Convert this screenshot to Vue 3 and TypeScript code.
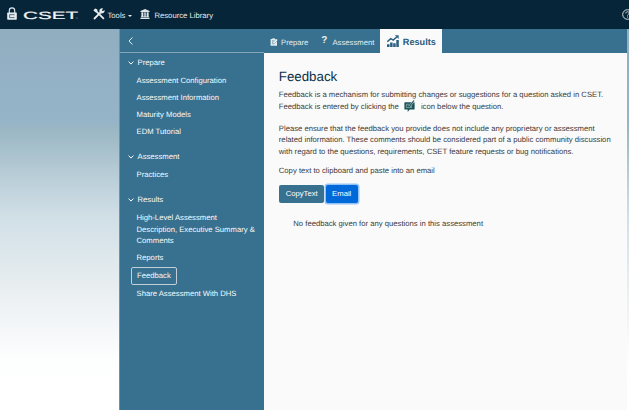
<script setup lang="ts">
interface NavItem { label: string; active?: boolean }
interface NavGroup { title: string; items: NavItem[] }

const groups: NavGroup[] = [
  {
    title: 'Prepare',
    items: [
      { label: 'Assessment Configuration' },
      { label: 'Assessment Information' },
      { label: 'Maturity Models' },
      { label: 'EDM Tutorial' },
    ],
  },
  { title: 'Assessment', items: [{ label: 'Practices' }] },
  {
    title: 'Results',
    items: [
      { label: 'High-Level Assessment Description, Executive Summary & Comments' },
      { label: 'Reports' },
      { label: 'Feedback', active: true },
      { label: 'Share Assessment With DHS' },
    ],
  },
]
</script>

<template>
  <div class="app">
    <header class="topbar">
      <svg class="lock" viewBox="0 0 10 13">
        <path d="M2.3 6V3.6a2.7 2.7 0 0 1 5.4 0V6" fill="none" stroke="#e6edf1" stroke-width="1.1" />
        <rect x="0.2" y="5.6" width="9.6" height="7.2" rx="0.7" fill="#e6edf1" />
        <path d="M7.6 7.7H2.6v2.9h5" fill="none" stroke="#4a6272" stroke-width="0.9" />
      </svg>
      <svg class="wordmark" viewBox="0 0 56 12">
        <text x="0" y="9.6" textLength="55" lengthAdjust="spacingAndGlyphs">CSET</text>
        <circle cx="54" cy="9" r="0.5" fill="#c3ced6" />
      </svg>
      <div class="menu tools">
        <svg class="tools-icon" viewBox="0 0 12 12">
          <path d="M2.6 2.6 10.4 10.4" stroke="#e6edf1" stroke-width="1.8" stroke-linecap="round" />
          <path d="M0.4 2.2 2.2 0.4 4.4 1.6 4.3 3.9 2.4 4.3z" fill="#e6edf1" />
          <path d="M8.6 3.4 1.5 10.5" stroke="#e6edf1" stroke-width="1.8" stroke-linecap="round" />
          <path d="M10.2 0.6A2.6 2.6 0 1 0 11.4 2L9.8 3.3 8.7 2.2z" fill="#e6edf1" />
        </svg>
        <span>Tools</span>
        <i class="caret"></i>
      </div>
      <div class="menu library">
        <svg class="library-icon" viewBox="0 0 10 11">
          <path d="M5 0 10 2.3v.9H0v-.9zM1 3.6h1.8v4.6h.7V3.6h1.2v4.6h.6V3.6h1.2v4.6h.7V3.6H9v4.6h.5v1H.5v-1H1zM0 9.6h10V11H0z" fill="#dfe7ec" />
        </svg>
        <span>Resource Library</span>
      </div>
      <svg class="help" viewBox="0 0 11 11">
        <circle cx="5.5" cy="5.5" r="4.8" fill="none" stroke="#d5dde3" stroke-width="1" />
        <path d="M3.8 4.4C3.8 2.2 7.3 2.3 7.2 4.3 7.1 5.3 5.6 5.3 5.6 6.6M5.6 7.5v1" fill="none" stroke="#d5dde3" stroke-width="1" />
      </svg>
    </header>

    <div class="body">
      <div class="shell">
        <div class="tabbar">
          <div class="collapse">
            <svg class="back" viewBox="0 0 5 8"><path d="M4.4.5 1 4l3.4 3.5" fill="none" stroke="#eaf1f4" stroke-width="1" /></svg>
          </div>
          <nav class="tabs">
            <div class="tab prepare">
              <svg class="tab-edit" viewBox="0 0 8 8">
                <path d="M.6 1h1.9V.3h2.2V1H7v6.7H.6z" fill="#e3edf1" />
                <path d="M2 2.8h1.8M2 4.2h1" stroke="#38718f" stroke-width=".6" fill="none" />
                <path d="M2.7 6.1 3.2 4.3 6.5.9 7.8 2.1 4.4 5.6z" fill="#fff" stroke="#38718f" stroke-width=".5" />
              </svg>
              <span>Prepare</span>
            </div>
            <div class="tab assess"><b class="question">?</b><span>Assessment</span></div>
            <div class="tab selected">
              <svg class="chart" viewBox="0 0 12 12">
                <path d="M0 9.3h2.5V12H0zM3.1 7.6h2.5V12H3.1zM6.2 8.2h2.5V12H6.2zM9.3 5h2.5v7H9.3z" fill="#2b6080" />
                <path d="M.3 6.8 3.7 3.6l2.5 1.5L10 1.8" fill="none" stroke="#2b6080" stroke-width="1.5" />
                <path d="M7.9.2H11.6V3.9z" fill="#2b6080" />
              </svg>
              <span>Results</span>
            </div>
          </nav>
        </div>

        <div class="columns">
          <aside class="sidebar">
            <section v-for="group in groups" :key="group.title" class="group">
              <div class="group-title">
                <svg class="chevron" viewBox="0 0 6 4"><path d="M.6.6 3 3.1 5.4.6" fill="none" stroke="#fff" stroke-width="1" /></svg>
                <span>{{ group.title }}</span>
              </div>
              <div v-for="item in group.items" :key="item.label" class="item" :class="{ active: item.active }">{{ item.label }}</div>
            </section>
          </aside>

          <main class="content">
            <h1>Feedback</h1>
            <p class="intro">
              Feedback is a mechanism for submitting changes or suggestions for a question asked in CSET.<br />
              <span class="icon-line">
                <span>Feedback is entered by clicking the</span>
                <svg class="note" viewBox="0 0 11 13">
                  <path d="M1 2.2h9q.6 0 .6.6V9q0 .6-.6.6H5.7L3.7 12V9.6H1Q.4 9.6.4 9V2.8Q.4 2.2 1 2.2z" fill="#1b5259" />
                  <path d="M2.4 4.2h3M2.4 4.2V7.6h5.2V5.6M3.6 5.8h1.2" stroke="#9dbbbd" stroke-width=".7" fill="none" />
                  <path d="M5.3 6.6 9.8.8" stroke="#d9e5e5" stroke-width="1.9" />
                  <path d="M5.1 6.9 10 .5" stroke="#1b5259" stroke-width="1.2" />
                </svg>
                <span>icon below the question.</span>
              </span>
            </p>
            <p class="notice">
              Please ensure that the feedback you provide does not include any proprietary or assessment<br />
              related information. These comments should be considered part of a public community discussion<br />
              with regard to the questions, requirements, CSET feature requests or bug notifications.
            </p>
            <p class="copy">Copy text to clipboard and paste into an email</p>
            <div class="buttons">
              <button class="btn">CopyText</button>
              <button class="btn focus">Email</button>
            </div>
            <p class="empty">No feedback given for any questions in this assessment</p>
          </main>
        </div>
      </div>
    </div>
  </div>
</template>

<style>
body { overflow: hidden; }
</style>

<style scoped>
* { box-sizing: border-box; }
.app {
  width: 629px; height: 410px; display: flex; flex-direction: column; overflow: hidden;
  font-family: "Liberation Sans", Arial, sans-serif; font-size: 7.7px; line-height: 11.5px;
  text-rendering: geometricPrecision; color: #3a3a3a;
}
svg { display: block; flex: none; }
.topbar {
  height: 29px; flex: none; display: flex; align-items: center; padding-left: 7px;
  background: #072538; color: #e6ebee;
}
.lock { width: 10px; height: 13px; margin-bottom: 3px; }
.wordmark { width: 56px; height: 12px; margin: 1px 0 0 6px; }
.wordmark text { font-family: "Liberation Sans", sans-serif; font-size: 10.5px; font-weight: 400; fill: #f1f4f6; stroke: #f1f4f6; stroke-width: .2px; }
.menu { display: flex; align-items: center; white-space: nowrap; }
.menu span { padding-top: 2px; }
.tools { margin-left: 13.5px; }
.tools-icon { width: 12px; height: 12px; margin: 0 3px 1px 0; }
.caret { border: 2px solid transparent; border-top-color: #e6ebee; border-bottom: 0; margin: 2px 0 0 2.5px; }
.library { margin-left: 8.5px; }
.library-icon { width: 10px; height: 10px; margin: 0 4px 1px 0; }
.help { width: 11px; height: 11px; margin: 0 -4px 1px auto; }
.body {
  flex: 1; min-height: 0; padding: 0 2px 0 119px;
  background: linear-gradient(#91aec1 0, #96b4c8 92px, #9ab7c3 101px, #b9cdd8 147px, #d0dfe6 187px, #dde7ec 225px, #e7edef 253px, #f3f6f8 295px, #fcfdfd 326px, #fff 350px);
}
.shell { height: 100%; display: flex; flex-direction: column; border-left: 1px solid #6794aa; }
.tabbar { height: 24px; flex: none; display: flex; background: #38718f; color: #e3edf1; }
.collapse { width: 143.5px; padding: 8px 0 0 7.5px; border-bottom: 1px solid #83a6b9; }
.back { width: 5px; height: 8px; }
.tabs { display: flex; align-items: stretch; flex: 1; }
.tab { display: flex; align-items: center; padding-top: 3px; }
.prepare { padding-left: 6px; }
.tab-edit { width: 8px; height: 8px; margin: 0 3.5px 2px 0; }
.assess { margin-left: 13px; }
.question { font-size: 10px; margin: 0 5px 3px 0; }
.selected {
  background: #fafafa; color: #25587a; margin-left: 6px; padding: 1px 0 0 6.5px; width: 62px;
  font-size: 9.15px; font-weight: 700;
}
.selected span { padding-top: 2px; }
.chart { width: 12px; height: 12px; margin: 0 4px 2px 0; }
.columns { flex: 1; min-height: 0; display: flex; }
.sidebar { width: 143.5px; flex: none; background: #38718f; color: #f7fafb; padding-top: .4px; }
.group { padding-bottom: 7.2px; }
.group-title { height: 18.35px; display: flex; align-items: center; padding-left: 8px; }
.chevron { width: 6px; height: 4px; margin-right: 3.5px; }
.item { padding: 2.9px 4px 2.9px 16.5px; }
.item.active { width: 46.5px; height: 18.5px; margin-left: 10.5px; padding: 2.5px 0 0 5.5px; border: 1px solid #bfd0da; border-radius: 2px; }
.content { flex: 1; min-width: 0; background: #fafafa; padding: 15px 0 0 15.3px; white-space: nowrap; }
h1 { margin: 0; color: #0b2f45; font-size: 13.3px; line-height: 18px; font-weight: 400; }
p { margin: 0; }
.intro { padding-top: 2.5px; }
.icon-line { display: flex; align-items: center; height: 13px; }
.note { width: 11px; height: 13px; margin: 0 6px 0 5px; }
.notice { padding-top: 9.5px; }
.copy { padding-top: 8px; }
.buttons { display: flex; gap: 2px; padding: 8.5px 0 0 .7px; }
.btn {
  height: 18px; padding: 0 6.2px; border: 0; border-radius: 2px; font: inherit; line-height: 18px; color: #fff; background: #38718f;
}
.btn.focus { background: #0069d9; box-shadow: 0 0 0 1.5px #95c2f5; }
.empty { padding: 15px 0 0 14.5px; }
</style>
